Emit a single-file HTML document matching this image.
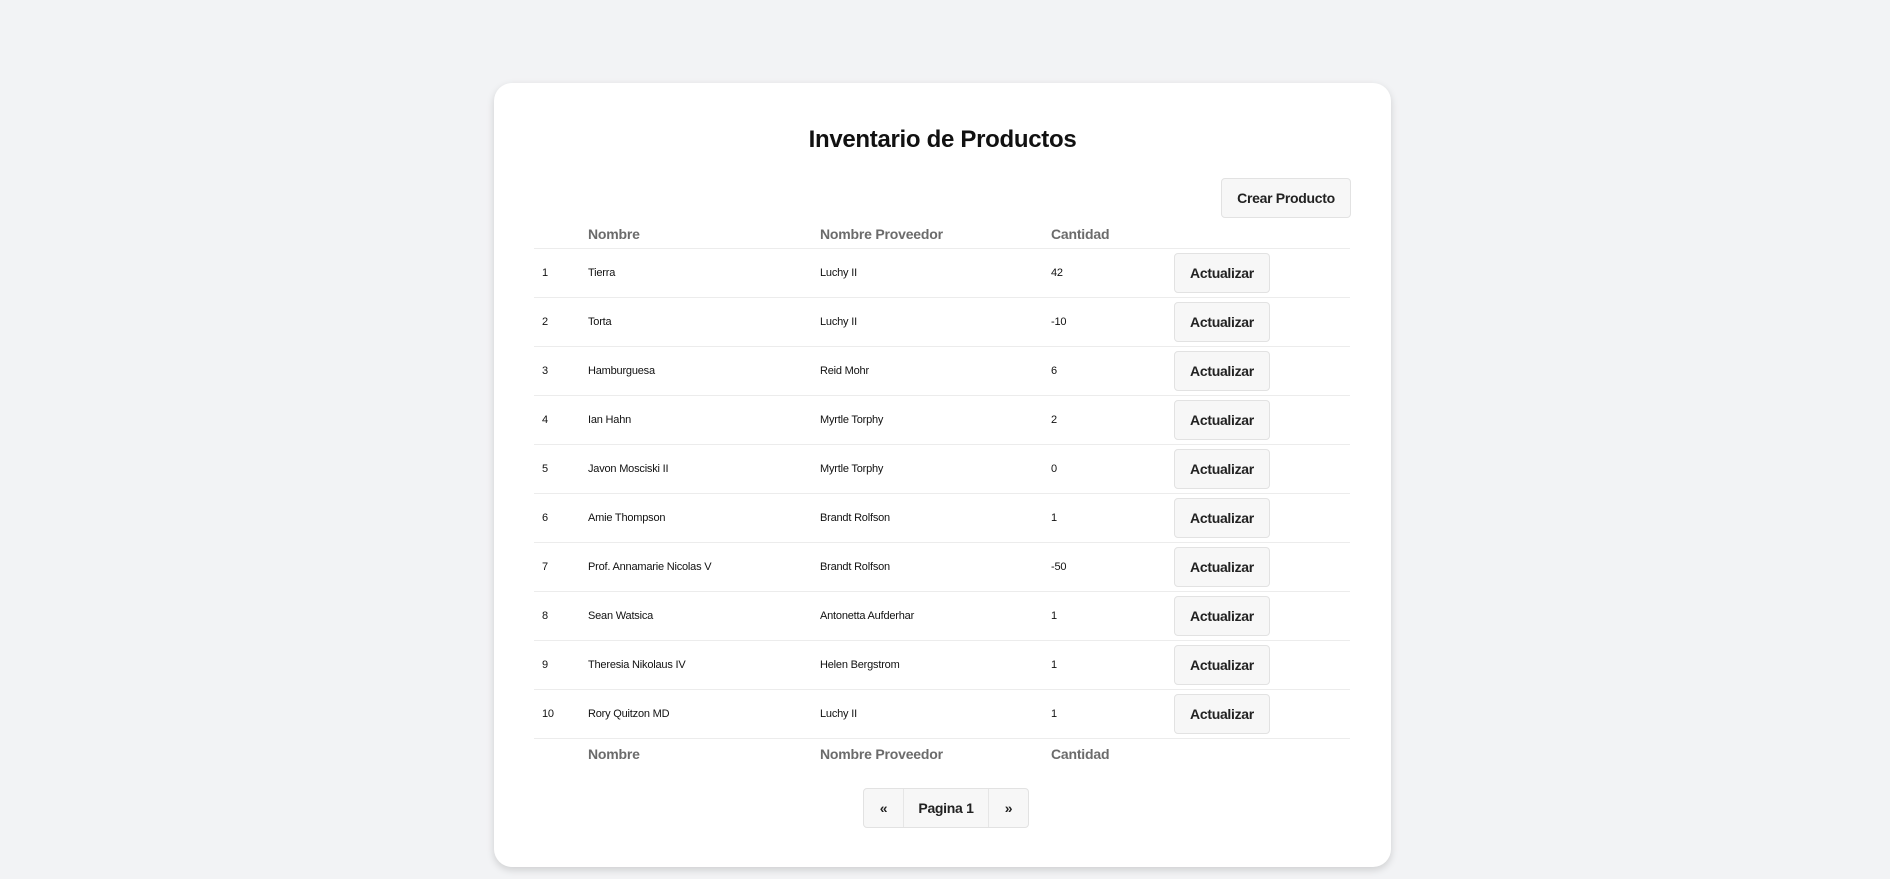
<!DOCTYPE html>
<html><head><meta charset="utf-8"><style>
*{box-sizing:border-box;margin:0;padding:0}
body{width:1890px;height:879px;background:#f2f3f5;font-family:"Liberation Sans",sans-serif;position:relative;overflow:hidden}
.card{position:absolute;left:494px;top:83px;width:897px;height:784px;background:#fff;border-radius:18px;box-shadow:0 3px 8px rgba(0,0,0,.15)}
h1{position:absolute;left:0;right:0;top:43px;text-align:center;font-size:24px;font-weight:bold;color:#111;letter-spacing:-0.3px}
.btn{position:absolute;background:#f7f7f7;border:1px solid #e2e2e2;border-radius:4px;font-size:14px;font-weight:bold;color:#222;display:flex;align-items:center;justify-content:center;letter-spacing:-0.3px}
.t{position:absolute;left:40px;width:816px}
.hdr{position:absolute;font-size:14px;font-weight:bold;color:#6b6b6b;letter-spacing:-0.2px}
.row{position:absolute;left:0;width:816px;height:49px;border-top:1px solid #ececec;font-size:11px;color:#111;letter-spacing:-0.2px}
.row span{position:absolute;top:18px}
</style></head><body>
<div class="card">
<h1>Inventario de Productos</h1>
<div class="btn" style="left:727px;top:95px;width:130px;height:40px">Crear Producto</div>
<div class="t" style="top:0">
<div class="hdr" style="left:54px;top:143px">Nombre</div>
<div class="hdr" style="left:286px;top:143px">Nombre Proveedor</div>
<div class="hdr" style="left:517px;top:143px">Cantidad</div>

<div class="row" style="top:165px"><span style="left:8px">1</span><span style="left:54px">Tierra</span><span style="left:286px">Luchy II</span><span style="left:517px">42</span><div class="btn" style="left:640px;top:4px;width:96px;height:40px">Actualizar</div></div>
<div class="row" style="top:214px"><span style="left:8px">2</span><span style="left:54px">Torta</span><span style="left:286px">Luchy II</span><span style="left:517px">-10</span><div class="btn" style="left:640px;top:4px;width:96px;height:40px">Actualizar</div></div>
<div class="row" style="top:263px"><span style="left:8px">3</span><span style="left:54px">Hamburguesa</span><span style="left:286px">Reid Mohr</span><span style="left:517px">6</span><div class="btn" style="left:640px;top:4px;width:96px;height:40px">Actualizar</div></div>
<div class="row" style="top:312px"><span style="left:8px">4</span><span style="left:54px">Ian Hahn</span><span style="left:286px">Myrtle Torphy</span><span style="left:517px">2</span><div class="btn" style="left:640px;top:4px;width:96px;height:40px">Actualizar</div></div>
<div class="row" style="top:361px"><span style="left:8px">5</span><span style="left:54px">Javon Mosciski II</span><span style="left:286px">Myrtle Torphy</span><span style="left:517px">0</span><div class="btn" style="left:640px;top:4px;width:96px;height:40px">Actualizar</div></div>
<div class="row" style="top:410px"><span style="left:8px">6</span><span style="left:54px">Amie Thompson</span><span style="left:286px">Brandt Rolfson</span><span style="left:517px">1</span><div class="btn" style="left:640px;top:4px;width:96px;height:40px">Actualizar</div></div>
<div class="row" style="top:459px"><span style="left:8px">7</span><span style="left:54px">Prof. Annamarie Nicolas V</span><span style="left:286px">Brandt Rolfson</span><span style="left:517px">-50</span><div class="btn" style="left:640px;top:4px;width:96px;height:40px">Actualizar</div></div>
<div class="row" style="top:508px"><span style="left:8px">8</span><span style="left:54px">Sean Watsica</span><span style="left:286px">Antonetta Aufderhar</span><span style="left:517px">1</span><div class="btn" style="left:640px;top:4px;width:96px;height:40px">Actualizar</div></div>
<div class="row" style="top:557px"><span style="left:8px">9</span><span style="left:54px">Theresia Nikolaus IV</span><span style="left:286px">Helen Bergstrom</span><span style="left:517px">1</span><div class="btn" style="left:640px;top:4px;width:96px;height:40px">Actualizar</div></div>
<div class="row" style="top:606px"><span style="left:8px">10</span><span style="left:54px">Rory Quitzon MD</span><span style="left:286px">Luchy II</span><span style="left:517px">1</span><div class="btn" style="left:640px;top:4px;width:96px;height:40px">Actualizar</div></div>
<div class="row" style="top:655px;height:1px"></div>
<div class="hdr" style="left:54px;top:663px">Nombre</div>
<div class="hdr" style="left:286px;top:663px">Nombre Proveedor</div>
<div class="hdr" style="left:517px;top:663px">Cantidad</div>
</div>
<div style="position:absolute;left:369px;top:705px;width:166px;height:40px;display:flex;border:1px solid #e2e2e2;border-radius:4px;background:#f7f7f7;font-size:14px;font-weight:bold;color:#222;letter-spacing:-0.3px">
<div style="width:40px;display:flex;align-items:center;justify-content:center;border-right:1px solid #e6e6e6">«</div>
<div style="width:85px;display:flex;align-items:center;justify-content:center;border-right:1px solid #e6e6e6">Pagina 1</div>
<div style="flex:1;display:flex;align-items:center;justify-content:center">»</div>
</div>
</div>
</body></html>
